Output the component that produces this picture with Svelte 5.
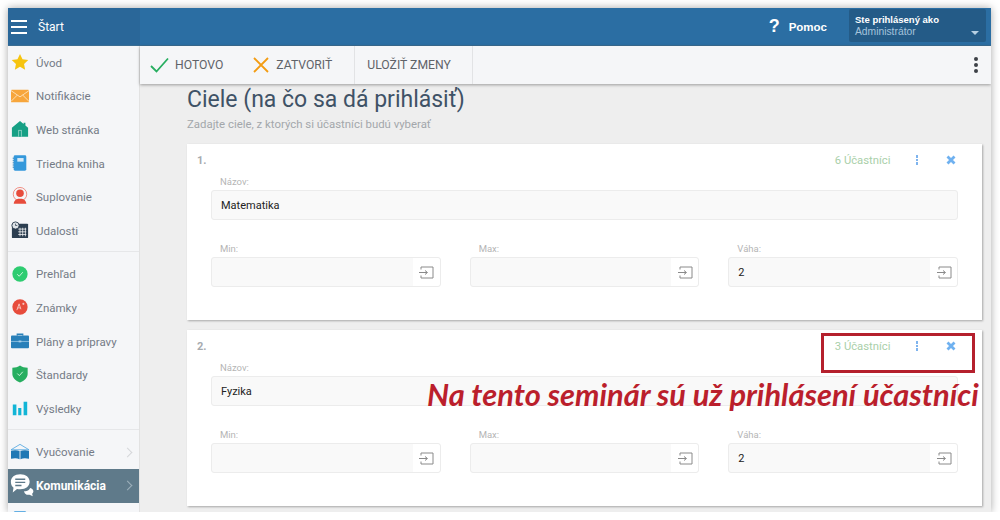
<script>
  const navGroups = [
    [
      { label: "Úvod", icon: "star" },
      { label: "Notifikácie", icon: "mail" },
      { label: "Web stránka", icon: "home" },
      { label: "Triedna kniha", icon: "book" },
      { label: "Suplovanie", icon: "person" },
      { label: "Udalosti", icon: "calendar" }
    ],
    [
      { label: "Prehľad", icon: "check" },
      { label: "Známky", icon: "grade" },
      { label: "Plány a prípravy", icon: "case" },
      { label: "Štandardy", icon: "shield" },
      { label: "Výsledky", icon: "bars" }
    ],
    [
      { label: "Vyučovanie", icon: "school", arrow: true },
      { label: "Komunikácia", icon: "chat", arrow: true, active: true },
      { label: "", icon: "book" }
    ]
  ];

  const goals = [
    { name: "Matematika", people: "6 Účastníci" },
    { name: "Fyzika", people: "3 Účastníci" }
  ];

  const limits = [
    { label: "Min:", value: "" },
    { label: "Max:", value: "" },
    { label: "Váha:", value: "2" }
  ];
</script>

{#snippet navIcon(name)}
  <svg class="nav-icon" class:wide={name === "chat"} viewBox="0 0 20 20">
    {#if name === "star"}
      <path d="M10 1l2.800 5.900 6.400.8-4.700 4.400 1.200 6.400L10 15.400l-5.700 3.100 1.200-6.400L.8 7.700l6.400-.8z" fill="#f6c40f" />
    {:else if name === "mail"}
      <rect x="0" y="3" width="20" height="14" rx="1" fill="#f7a63c" />
      <path d="M0 4l10 7 10-7M0 16l7-7M20 16l-7-7" fill="none" stroke="#fde3bd" stroke-width="1" />
    {:else if name === "home"}
      <path d="M10 1l4 3.400V3h2v3.100l3 2.600v9.800H1V8.700z" fill="#16a085" />
      <rect x="8" y="11" width="4" height="7.500" fill="#8fd3c5" />
      <rect x="9" y="12" width="2" height="6.500" fill="#16a085" />
    {:else if name === "book"}
      <rect x="3" y="1.500" width="14" height="17" rx="1.500" fill="#3498db" />
      <rect x="7" y="4.500" width="7" height="4" fill="#d6eaf8" />
      <path d="M2.500 4v12" stroke="#1f78b4" stroke-width="1" stroke-dasharray="1.500 1" />
    {:else if name === "person"}
      <circle cx="10" cy="8" r="7.500" fill="none" stroke="#ee6a5b" stroke-width="0.800" />
      <circle cx="10" cy="7" r="4.200" fill="#e74c3c" />
      <path d="M3 18.500c.5-4 3-5 5-5.500h4c2 .5 4.500 1.500 5 5.500z" fill="#e74c3c" />
    {:else if name === "calendar"}
      <rect x="1" y="3" width="18" height="16" rx="1" fill="#2c3e50" />
      <path d="M8 9h9M8 12h9M8 15h9M10 7.500v9.500M13 7.500v9.500M16 7.500v9.500" stroke="#fff" stroke-width="0.800" />
      <circle cx="5" cy="5" r="4" fill="#dfe4e8" stroke="#2c3e50" stroke-width="1" />
      <path d="M5 3v2h2" fill="none" stroke="#2c3e50" stroke-width="0.800" />
    {:else if name === "check"}
      <circle cx="10" cy="10" r="8.500" fill="#2ecc71" />
      <path d="M6.800 10.200l2.300 2.300 4-4.500" fill="none" stroke="#c9f3d9" stroke-width="1.100" />
    {:else if name === "grade"}
      <circle cx="10" cy="10" r="8.500" fill="#e74c3c" />
      <path d="M6.500 13.500L9 6.500l2 6M7.500 11h3M12.500 6.500h2.500M13.700 5.300v2.400" fill="none" stroke="#fbd7d3" stroke-width="0.900" />
    {:else if name === "case"}
      <path d="M7 4V2.500h6V4" fill="none" stroke="#2980b9" stroke-width="1.500" />
      <rect x="0" y="4" width="20" height="14" rx="1" fill="#2980b9" />
      <path d="M0 10.500h20" stroke="#a9d0ea" stroke-width="0.800" />
      <rect x="8.500" y="9.500" width="3" height="2" fill="#a9d0ea" />
    {:else if name === "shield"}
      <path d="M10 .5c2.500 1.800 5 2.400 8.500 2.500v7c0 4-3.500 7.500-8.500 9.500C5 17.500 1.500 14 1.500 10V3C5 2.900 7.500 2.300 10 .5z" fill="#27ae60" />
      <path d="M7 9.500l2.300 2.300 3.800-4.300" fill="none" stroke="#c9f3d9" stroke-width="1.100" />
    {:else if name === "bars"}
      <path d="M2 6h4v12H2zM8 10h3.500v8H8zM14 3h4v15h-4z" fill="#12b5d6" />
    {:else if name === "school"}
      <path d="M0 7.500L10 1.500l10 6z" fill="none" stroke="#5dade2" stroke-width="1" />
      <path d="M0 8.500c3.500-.8 7-.8 9.500.5v9c-2.500-1.300-6-1.300-9.500-.5zM20 8.500c-3.500-.8-7-.8-9.500.5v9c2.500-1.300 6-1.300 9.500-.5z" fill="#1f78b4" />
    {:else if name === "chat"}
      <path d="M9 1c4.500 0 7.500 2.500 7.500 6s-3 6-7.500 6c-1 0-1.800-.1-2.600-.3L3 15.500l.6-3.700C2.200 10.700 1.500 9 1.500 7c0-3.500 3-6 7.500-6z" fill="#fff" />
      <path d="M5 5h8M5 7.500h8M5 10h5" stroke="#5f7a8a" stroke-width="1.100" />
      <path d="M12 14.500c1.500 0 3-.4 4-1.200l1-1.300c1.500.6 2.500 1.400 2.500 2.500 0 .9-.5 1.500-1 2l.5 2-2.600-1.200c-1.800.4-3.800 0-4.400-2.800z" fill="#fff" />
    {/if}
  </svg>
{/snippet}

<div class="window">
  <header class="topbar">
    <div class="brand">
      <span class="burger"><i></i><i></i><i></i></span>
      <span>Štart</span>
    </div>
    <div class="help">
      <span class="help__mark">?</span>
      <span>Pomoc</span>
    </div>
    <div class="user">
      <strong>Ste prihlásený ako</strong>
      <span>Administrátor</span>
      <i class="user__caret"></i>
    </div>
  </header>

  <div class="body">
    <nav class="sidebar">
      {#each navGroups as group}
        <div class="nav-group">
          {#each group as item}
            <div class="nav-item" class:active={item.active}>
              <span class="nav-item__icon">{@render navIcon(item.icon)}</span>
              <span class="nav-item__label">{item.label}</span>
              {#if item.arrow}<span class="nav-item__arrow"></span>{/if}
            </div>
          {/each}
        </div>
      {/each}
    </nav>

    <div class="main">
      <div class="toolbar">
        <button class="tool">
          <svg width="19" height="16" viewBox="0 0 19 16"><path d="M1 9l5.500 5.500L18 1.500" fill="none" stroke="#27ae60" stroke-width="1.800" /></svg>
          HOTOVO
        </button>
        <button class="tool tool--close">
          <svg width="16" height="16" viewBox="0 0 16 16"><path d="M1 1l14 14M15 1L1 15" fill="none" stroke="#f39c12" stroke-width="1.800" /></svg>
          ZATVORIŤ
        </button>
        <button class="tool tool--save">ULOŽIŤ ZMENY</button>
        <span class="toolbar__more"><i></i><i></i><i></i></span>
      </div>

      <div class="content">
        <h1>Ciele (na čo sa dá prihlásiť)</h1>
        <p class="hint">Zadajte ciele, z ktorých si účastníci budú vyberať</p>

        {#each goals as goal, i}
          <section class="card">
            <div class="card__head">
              <span class="card__num">{i + 1}.</span>
              <span class="card__people">{goal.people}</span>
              <span class="card__dots"><i></i><i></i><i></i></span>
              <svg class="card__remove" width="10" height="10" viewBox="0 0 10 10"><path d="M1.500 1.500l7 7M8.500 1.500l-7 7" stroke="#6fb1f0" stroke-width="2.800" /></svg>
            </div>
            <label class="field__label" for="name-{i}">Názov:</label>
            <input id="name-{i}" class="input" value={goal.name} />
            <div class="limits">
              {#each limits as limit}
                <div class="limit">
                  <span class="field__label">{limit.label}</span>
                  <div class="input input--addon">
                    <span class="input__value">{limit.value}</span>
                    <span class="addon">
                      <svg width="16" height="13" viewBox="0 0 16 13"><path d="M3 3.500V1h12v11H3V9.500M1 6.500h8M7 4.500l2.500 2-2.500 2" fill="none" stroke="#8a8a8a" stroke-width="1" /></svg>
                    </span>
                  </div>
                </div>
              {/each}
            </div>
          </section>
        {/each}
      </div>
    </div>
  </div>

  <div class="mark-box"></div>
  <div class="mark-text">Na tento seminár sú už prihlásení účastníci</div>
</div>

<style>
  :global(body) {
    background: #fff;
    overflow: hidden;
  }

  .window {
    position: relative;
    box-sizing: border-box;
    margin: 8px 0 0 8px;
    width: 983px;
    height: 504px;
    overflow: hidden;
    background: #eee;
    box-shadow: 0 0 8px rgba(0, 0, 0, 0.35);
    font-family: Roboto, "Liberation Sans", sans-serif;
    font-size: 12px;
    color: #747b86;
  }

  .topbar {
    display: flex;
    align-items: center;
    height: 38px;
    background: #2b6ea3;
    color: #fff;
    border-bottom: 1px solid #3b6d92;
    box-sizing: border-box;
  }

  .brand {
    display: flex;
    align-items: center;
    gap: 11px;
    width: 132px;
    height: 100%;
    padding-left: 3px;
    box-sizing: border-box;
    background: #2a6799;
    font-size: 12px;
    margin-right: auto;
  }

  .burger {
    display: flex;
    flex-direction: column;
    gap: 4px;
    width: 16px;
  }

  .burger i {
    height: 2px;
    background: #fff;
  }

  .help {
    display: flex;
    align-items: center;
    gap: 9px;
    margin-right: 22px;
    font-size: 11.500px;
    font-weight: 700;
    font-family: "Liberation Sans", sans-serif;
  }

  .help__mark {
    font-size: 18px;
  }

  .user {
    position: relative;
    display: flex;
    flex-direction: column;
    justify-content: center;
    gap: 1px;
    box-sizing: border-box;
    width: 137px;
    height: 33px;
    margin: 0 5px 2px 0;
    padding-left: 6px;
    background: #245b87;
    border-radius: 2px;
    font-size: 10.300px;
    font-family: "Liberation Sans", sans-serif;
  }

  .user strong {
    font-size: 9.500px;
  }

  .user span {
    color: #a5c3dc;
  }

  .user__caret {
    position: absolute;
    right: 7px;
    bottom: 7px;
    border: 4px solid transparent;
    border-top-color: #b6cfe2;
    border-bottom: 0;
  }

  .body {
    display: flex;
    height: 466px;
  }

  .sidebar {
    flex: none;
    width: 132px;
    box-sizing: border-box;
    background: #f5f6f8;
    border-right: 1px solid #e2e2e2;
  }

  .nav-group {
    padding: 0 0 3px;
    margin-bottom: 6px;
    border-bottom: 1px solid #e6e7e9;
  }

  .nav-group:last-child {
    border-bottom: 0;
  }

  .nav-item {
    position: relative;
    display: flex;
    align-items: center;
    height: 33.600px;
    padding-left: 28px;
    box-sizing: border-box;
    font-size: 11.500px;
  }

  .nav-item__icon {
    position: absolute;
    left: 3px;
    top: 7px;
    width: 18px;
    height: 18px;
  }

  .nav-icon {
    display: block;
    width: 18px;
    height: 18px;
  }

  .nav-icon.wide {
    width: 25px;
    height: 25px;
    margin: -3px 0 0 -2px;
  }

  .nav-item__arrow {
    position: absolute;
    right: 8px;
    top: 13px;
    width: 6px;
    height: 6px;
    border-top: 1px solid #d5d7da;
    border-right: 1px solid #d5d7da;
    transform: rotate(45deg);
  }

  .nav-item.active {
    background: #5f7a8a;
    color: #fff;
    font-weight: 700;
    font-size: 12px;
  }

  .nav-item.active .nav-item__arrow {
    border-color: #9db0bb;
  }

  .main {
    flex: 1;
    min-width: 0;
  }

  .toolbar {
    position: relative;
    display: flex;
    align-items: center;
    height: 38px;
    background: #f5f6f8;
    box-shadow: 0 1px 3px rgba(0, 0, 0, 0.35);
  }

  .tool {
    display: flex;
    align-items: center;
    gap: 6px;
    height: 100%;
    padding: 0;
    margin-left: 10px;
    border: 0;
    background: none;
    font: inherit;
    font-size: 12.200px;
    color: #5f6368;
  }

  .tool--close {
    gap: 7px;
    margin-left: 30px;
    padding-right: 22px;
    border-right: 1px solid #e2e3e5;
  }

  .tool--save {
    margin-left: 0;
    padding: 0 21px 0 12px;
    border-right: 1px solid #e2e3e5;
  }

  .toolbar__more {
    display: flex;
    flex-direction: column;
    gap: 2px;
    margin-left: auto;
    margin-right: 13px;
  }

  .toolbar__more i {
    width: 4px;
    height: 4px;
    border-radius: 50%;
    background: #3d4147;
  }

  .content {
    padding: 0 9px 0 47px;
  }

  h1 {
    margin: 2px 0 0;
    font-size: 23px;
    font-weight: 400;
    line-height: 28px;
    color: #3f5266;
  }

  .hint {
    margin: 2px 0 12px;
    font-size: 11.400px;
    line-height: 16px;
    color: #a3a7ab;
  }

  .card {
    height: 176px;
    margin-bottom: 10px;
    padding: 0 24px;
    box-sizing: border-box;
    background: #fff;
    box-shadow: 1px 1px 2px rgba(0, 0, 0, 0.3);
  }

  .card__head {
    display: flex;
    align-items: center;
    height: 32px;
    margin: 0 -24px;
    padding: 0 26px 0 10px;
  }

  .card__num {
    font-weight: 700;
    font-size: 11px;
    color: #a7abaf;
    margin-right: auto;
  }

  .card__people {
    font-size: 11.300px;
    color: #a9cfa9;
  }

  .card__dots {
    display: flex;
    flex-direction: column;
    gap: 1px;
    margin: 0 28px 0 25px;
  }

  .card__dots i {
    width: 2.500px;
    height: 2.500px;
    background: #7fb4ee;
  }

  .field__label {
    display: block;
    padding: 0 0 2px 9px;
    font-size: 9.500px;
    line-height: 12px;
    color: #b5b5b5;
  }

  .input {
    display: block;
    box-sizing: border-box;
    width: 100%;
    height: 30px;
    padding: 0 9px;
    background: #f9f9f9;
    border: 1px solid #ececec;
    border-radius: 3px;
    font: inherit;
    font-size: 11px;
    color: #222;
    outline: none;
  }

  .input--addon {
    display: flex;
    align-items: center;
    padding: 0 0 0 9px;
  }

  .input__value {
    flex: 1;
  }

  .addon {
    display: flex;
    align-items: center;
    justify-content: center;
    width: 27px;
    height: 28px;
    background: #fff;
    border-radius: 0 3px 3px 0;
  }

  .limits {
    display: grid;
    grid-template-columns: repeat(3, 1fr);
    gap: 29px;
    margin-top: 23px;
  }

  .mark-box {
    position: absolute;
    left: 813px;
    top: 325px;
    width: 154px;
    height: 40px;
    box-sizing: border-box;
    border: 3px solid #b5202d;
  }

  .mark-text {
    position: absolute;
    left: 419px;
    top: 369px;
    white-space: nowrap;
    font-family: Lato, sans-serif;
    font-style: italic;
    font-weight: 700;
    font-size: 30.800px;
    line-height: 36px;
    color: #bb1f2c;
  }
</style>
